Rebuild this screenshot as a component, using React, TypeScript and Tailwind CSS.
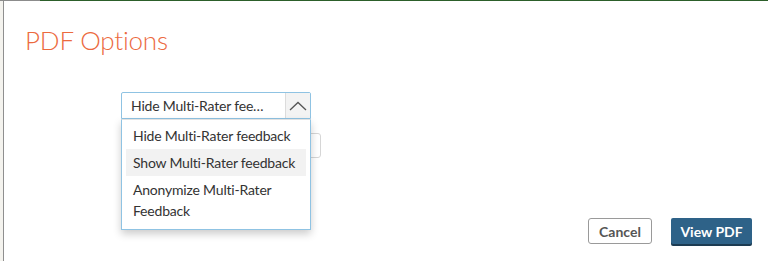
import * as React from "react";

function ChevronUp() {
  return (
    <svg width="18" height="10" viewBox="0 0 18 10" fill="none" aria-hidden="true">
      <path d="M1 9 L9 1.5 L17 9" stroke="#555" strokeWidth="1.3" />
    </svg>
  );
}

const options = [
  "Hide Multi-Rater feedback",
  "Show Multi-Rater feedback",
  "Anonymize Multi-Rater Feedback",
];

export default function App() {
  const [active] = React.useState(1);

  return (
    <div className="h-[261px] w-[768px] overflow-hidden bg-[#f4f3ee] font-['Lato',sans-serif] text-[#333]">
      <div className="flex h-px">
        <div className="w-[40px] bg-[#8c8c8c]" />
        <div className="flex-1 bg-[#2c5f2a]" />
      </div>
      <div className="ml-[3px] flex h-[260px] flex-col border-l border-[#8f8f8f] bg-white">
        <h1 className="pl-[21px] pt-[23px] text-[26px] font-light leading-[33px] tracking-[-0.2px] text-[#ec6a3e]">
          PDF Options
        </h1>

        <div className="ml-[117px] mt-[35px]">
          <div className="relative w-[190px]">
            <div className="flex h-[27px] items-stretch rounded-t-[2px] border border-[#8fc3e3] bg-white">
              <span className="flex flex-1 items-center pl-[9px] text-[14px] leading-none tracking-[-0.2px]">
                Hide Multi-Rater fee…
              </span>
              <span className="flex w-[25px] items-center justify-center border-l border-[#dcdcdc] bg-[#f3f3f3]">
                <ChevronUp />
              </span>
            </div>
            <ul className="absolute left-0 top-full z-10 w-[190px] border border-t-[#e2e2e2] border-x-[#8fc3e3] border-b-[#8fc3e3] bg-white px-[4px] pb-[5px] pt-[2px] shadow-[0_4px_8px_rgba(0,0,0,0.2)]">
              {options.map((o, i) => (
                <li
                  key={o}
                  className={`px-[7px] py-[3px] text-[14px] leading-[21px] tracking-[-0.2px] ${
                    i === active ? "bg-[#f2f2f2]" : ""
                  }`}
                >
                  {o}
                </li>
              ))}
            </ul>
          </div>
          <div className="mt-[14px] h-[25px] w-[200px] rounded-[3px] border border-[#d6d6d6] bg-white" />
        </div>

        <div className="mt-auto flex justify-end gap-[19px] pb-[17px] pr-[16px]">
          <button className="h-[26px] w-[64px] rounded-[3px] border border-[#9a9a9a] bg-white text-[14px] font-bold text-[#555]">
            Cancel
          </button>
          <button className="h-[26px] w-[81px] rounded-[2px] bg-[#2e6288] text-[14px] font-bold text-white shadow-[0_2px_0_#1c3b52]">
            View PDF
          </button>
        </div>
      </div>
    </div>
  );
}
